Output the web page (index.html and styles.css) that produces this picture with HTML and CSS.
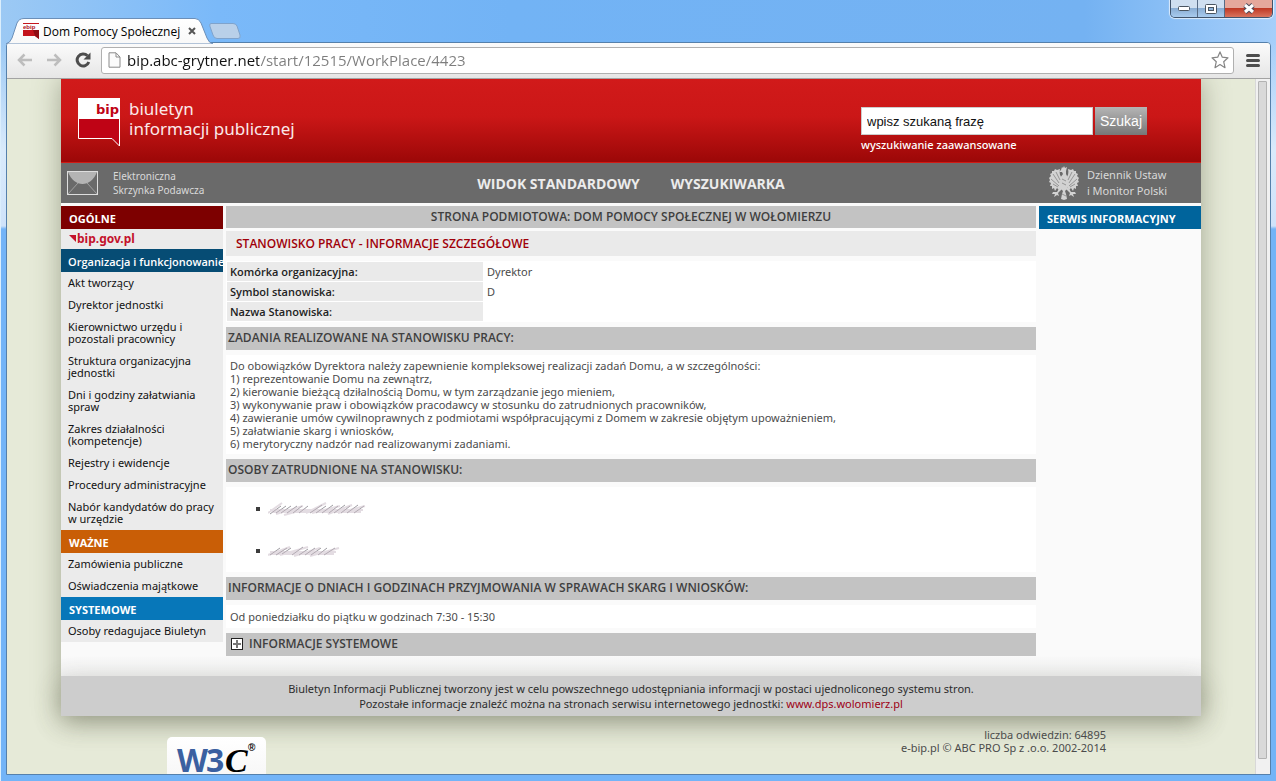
FILE: index.html
```html
<!DOCTYPE html>
<html lang="pl">
<head>
<meta charset="utf-8">
<title>Dom Pomocy Społecznej w Wołomierzu</title>
<link rel="stylesheet" href="styles.css">
</head>
<body>
<div class="window">
  <div class="titlebar">
    <div class="tab">
      <svg class="tab-shape" width="208" height="26" viewBox="0 0 208 26" aria-hidden="true">
        <defs><linearGradient id="tabfill" x1="0" y1="0" x2="0" y2="1"><stop offset="0" stop-color="#fff"/><stop offset="1" stop-color="#f8f8f8"/></linearGradient></defs>
        <path d="M0 26 Q4 25 6 20 L11 5 Q13 .5 18 .5 H189 Q193 .5 195 5 L201 20 Q203 25 207 26Z" fill="url(#tabfill)" stroke="#6c8fb8"/>
      </svg>
      <svg class="favicon" width="17" height="16" viewBox="0 0 17 16" aria-hidden="true">
        <path d="M0 .5H16" stroke="#c4141c"/>
        <text x="0" y="6" class="fav-text">ebip</text>
        <path d="M0 7H16V16L12 13H0Z" fill="#c4141c"/><path d="M10 7H16V16L12 13Z" fill="#8f0c12"/>
      </svg>
      <span class="tab-title">Dom Pomocy Społecznej</span>
      <button class="tab-close" aria-label="Zamknij kartę"><svg width="8" height="8" viewBox="0 0 8 8"><path d="M1 1L7 7M7 1L1 7" stroke="#555" stroke-width="2"/></svg></button>
    </div>
    <button class="new-tab" aria-label="Nowa karta"><svg width="32" height="16" viewBox="0 0 32 16"><path d="M2 .5H24Q27 .5 28 3L31 12Q32 15.500 29 15.500H8Q5 15.500 4 12L.8 3Q.3 .5 2 .5Z" fill="#b9d0e9" stroke="#7fa3cc"/></svg></button>
    <div class="controls">
      <button class="ctl" aria-label="Minimalizuj"><svg width="12" height="5" viewBox="0 0 12 5"><rect x=".5" y=".5" width="11" height="4" rx="1" fill="#fff" stroke="#4a5560"/></svg></button>
      <button class="ctl" aria-label="Maksymalizuj"><svg width="12" height="10" viewBox="0 0 12 10"><rect x=".5" y=".5" width="11" height="9" rx="1" fill="#fff" stroke="#4a5560"/><rect x="3.500" y="3.500" width="5" height="3" fill="#8fb4da" stroke="#4a5560"/></svg></button>
      <button class="ctl ctl-close" aria-label="Zamknij"><svg width="14" height="11" viewBox="0 0 14 11"><path d="M3 2L11 9M11 2L3 9" stroke="#4b4a5a" stroke-width="5"/><path d="M3 2L11 9M11 2L3 9" stroke="#fff" stroke-width="3"/></svg></button>
    </div>
  </div>
  <div class="browser">
    <div class="toolbar">
      <button class="tool" aria-label="Wstecz"><svg width="16" height="14" viewBox="0 0 16 14"><path d="M15 7H2M7.500 1.500L2 7L7.500 12.500" fill="none" stroke="#bdbdbd" stroke-width="2.500"/></svg></button>
      <button class="tool" aria-label="Dalej"><svg width="16" height="14" viewBox="0 0 16 14"><path d="M1 7H14M8.500 1.500L14 7L8.500 12.500" fill="none" stroke="#bdbdbd" stroke-width="2.500"/></svg></button>
      <button class="tool" aria-label="Odśwież"><svg width="16" height="16" viewBox="0 0 16 16"><path d="M12.500 3.800A6 6 0 1 0 13.800 10" fill="none" stroke="#4d4d4d" stroke-width="3"/><path d="M15.500 .5V7.500H8.500Z" fill="#4d4d4d"/></svg></button>
      <div class="address">
        <svg width="13" height="16" viewBox="0 0 13 16" aria-hidden="true"><path d="M1 .8H8L12 5V15.200H1Z" fill="#fbfbfb" stroke="#8a8a8a"/><path d="M8 1V5H12" fill="none" stroke="#8a8a8a"/></svg>
        <input class="url" type="text" aria-label="Adres" value="bip.abc-grytner.net/start/12515/WorkPlace/4423">
        <button class="star" aria-label="Zakładka"><svg width="18" height="18" viewBox="0 0 18 18"><path d="M9 .9L11.300 6.200L17 6.800L12.700 10.700L14 16.700L9 13.600L4 16.700L5.300 10.700L1 6.800L6.700 6.200Z" fill="#fff" stroke="#858585" stroke-width="1.200" stroke-linejoin="round"/></svg></button>
      </div>
      <button class="tool menu" aria-label="Menu"><svg width="14" height="13" viewBox="0 0 14 13"><path d="M1.500 1.500H12.500M1.500 6.500H12.500M1.500 11.500H12.500" stroke="#4d4d4d" stroke-width="3" stroke-linecap="round"/></svg></button>
    </div>
    <div class="viewport">
      <div class="page">
        <div class="sheet">
          <header class="banner">
            <div class="brand">
              <svg width="42" height="50" viewBox="0 0 42 50" aria-hidden="true">
                <path d="M.5 21V41.500H34L41.500 49V21Z" fill="#bf0315" stroke="#fff"/>
                <path d="M0 1H42V22H0Z" fill="#fff"/>
                <text x="41" y="17" text-anchor="end" class="bip-text">bip</text>
              </svg>
              <p class="brand-name">biuletyn<br>informacji publicznej</p>
            </div>
            <form class="search">
              <div class="search-row">
                <input class="search-box" type="text" aria-label="Szukana fraza" value="wpisz szukaną frazę">
                <button class="search-go" type="button">Szukaj</button>
              </div>
              <a class="advanced" href="#">wyszukiwanie zaawansowane</a>
            </form>
          </header>
          <nav class="topnav">
            <a class="inbox" href="#">
              <svg width="31" height="24" viewBox="0 0 31 24" aria-hidden="true"><path d="M1 1C7 17 24 17 30 1Z" fill="#b4b4b4"/><path d="M1 23L11 12M30 23L20 12" stroke="#a0a0a0"/><rect x=".5" y=".5" width="30" height="23" fill="none" stroke="#dedede"/></svg>
              <span>Elektroniczna<br>Skrzynka Podawcza</span>
            </a>
            <div class="modes"><a href="#">WIDOK STANDARDOWY</a><a href="#">WYSZUKIWARKA</a></div>
            <a class="journal" href="#">
              <svg width="32" height="34" viewBox="0 0 32 34" aria-hidden="true">
                <g fill="#d2d2d2">
                  <path d="M14 12C12 10 11 7 12 3L9 4L7 3L6 5L4 5L4 7L2 8L3 10L1 12L2 14L1 16L3 17L2 20L4 20L4 23L6 22L7 25L9 22L11 24L13 20Z"/>
                  <path d="M18 12C20 10 21 7 20 3L23 4L25 3L26 5L28 5L28 7L30 8L29 10L31 12L30 14L31 16L29 17L30 20L28 20L28 23L26 22L25 25L23 22L21 24L19 20Z"/>
                  <path d="M13 4L14 1L15 2L16 0L17 2L19 1L18 5L18 8L20 12L21 18L19 23L17 25L18 28L19 33L16 34L13 33L14 28L15 25L12 22L11 17L12 12L15 8L14 6L11 6Z"/>
                  <path d="M12 21L9 26L5 26L4 28L7 28L6 31L9 29L11 30L10 27L14 23ZM20 21L23 26L27 26L28 28L25 28L26 31L23 29L21 30L22 27L18 23Z"/>
                </g>
                <path d="M5 8L11 17M3 13L11 20M8 6L12 14M5 18L10 21M27 8L21 17M29 13L21 20M24 6L20 14M27 18L22 21M14 13L18 15M14 17L18 19M14 28L18 30" stroke="#959595" fill="none"/>
              </svg>
              <span>Dziennik Ustaw<br>i Monitor Polski</span>
            </a>
          </nav>
          <div class="columns">
            <aside class="side">
              <h2 class="side-head maroon">OGÓLNE</h2>
              <a class="gov" href="#"><svg width="80" height="16" viewBox="0 0 80 16" role="img" aria-label="bip.gov.pl"><path d="M0 4H7V11Z" fill="#c4122b"/><text x="8" y="12" class="gov-text">bip.gov.pl</text></svg></a>
              <h2 class="side-head navy">Organizacja i funkcjonowanie</h2>
              <ul class="side-list">
                <li><a href="#">Akt tworzący</a></li>
                <li><a href="#">Dyrektor jednostki</a></li>
                <li><a href="#">Kierownictwo urzędu i<br>pozostali pracownicy</a></li>
                <li><a href="#">Struktura organizacyjna<br>jednostki</a></li>
                <li><a href="#">Dni i godziny załatwiania<br>spraw</a></li>
                <li><a href="#">Zakres działalności<br>(kompetencje)</a></li>
                <li><a href="#">Rejestry i ewidencje</a></li>
                <li><a href="#">Procedury administracyjne</a></li>
                <li><a href="#">Nabór kandydatów do pracy<br>w urzędzie</a></li>
              </ul>
              <h2 class="side-head orange">WAŻNE</h2>
              <ul class="side-list">
                <li><a href="#">Zamówienia publiczne</a></li>
                <li><a href="#">Oświadczenia majątkowe</a></li>
              </ul>
              <h2 class="side-head blue">SYSTEMOWE</h2>
              <ul class="side-list">
                <li><a href="#">Osoby redagujace Biuletyn</a></li>
              </ul>
            </aside>
            <main class="main">
              <h1 class="subject">STRONA PODMIOTOWA: DOM POMOCY SPOŁECZNEJ W WOŁOMIERZU</h1>
              <h2 class="title">STANOWISKO PRACY - INFORMACJE SZCZEGÓŁOWE</h2>
              <table class="facts">
                <tr><th scope="row">Komórka organizacyjna:</th><td>Dyrektor</td></tr>
                <tr><th scope="row">Symbol stanowiska:</th><td>D</td></tr>
                <tr><th scope="row">Nazwa Stanowiska:</th><td></td></tr>
              </table>
              <h3 class="bar">ZADANIA REALIZOWANE NA STANOWISKU PRACY:</h3>
              <div class="block">Do obowiązków Dyrektora należy zapewnienie kompleksowej realizacji zadań Domu, a w szczególności:<br>
                1) reprezentowanie Domu na zewnątrz,<br>
                2) kierowanie bieżącą dziłalnością Domu, w tym zarządzanie jego mieniem,<br>
                3) wykonywanie praw i obowiązków pracodawcy w stosunku do zatrudnionych pracowników,<br>
                4) zawieranie umów cywilnoprawnych z podmiotami współpracującymi z Domem w zakresie objętym upoważnieniem,<br>
                5) załatwianie skarg i wniosków,<br>
                6) merytoryczny nadzór nad realizowanymi zadaniami.</div>
              <h3 class="bar">OSOBY ZATRUDNIONE NA STANOWISKU:</h3>
              <ul class="people">
                <li><svg width="98" height="16" viewBox="0 0 98 16" aria-hidden="true"><g class="smudge">
                  <path d="M2 13L13 5M8 12L18 5M13 12L23 5M19 12L29 5M25 12L34 5M31 12L40 5M42 12L54 4M48 12L58 5M54 12L65 4M61 12L70 5M66 12L77 4M73 12L82 5M79 12L90 4M86 12L96 5"/>
                  <path class="faint" d="M0 12L14 2M8 13L35 5M16 14L38 8M38 12L58 2M44 12L72 5M60 13L84 4M70 12L97 5M2 9H95M4 11H93"/></g></svg></li>
                <li><svg width="98" height="16" viewBox="0 0 98 16" aria-hidden="true"><g class="smudge">
                  <path d="M2 12L12 5M8 12L19 5M14 11L23 5M24 12L35 4M31 12L40 6M37 12L47 5M43 12L53 5M50 12L59 5M56 12L67 5"/>
                  <path class="faint" d="M0 12L22 4M12 12L40 4M26 13L52 5M42 13L71 5M2 9H68M3 11H66"/></g></svg></li>
              </ul>
              <h3 class="bar">INFORMACJE O DNIACH I GODZINACH PRZYJMOWANIA W SPRAWACH SKARG I WNIOSKÓW:</h3>
              <div class="block hours">Od poniedziałku do piątku w godzinach 7:30 - 15:30</div>
              <h3 class="bar bar-toggle"><button class="toggle" aria-label="Rozwiń"><svg width="12" height="12" viewBox="0 0 12 12"><rect x=".5" y=".5" width="11" height="11" fill="#fff" stroke="#222"/><path d="M2 6H10M6 2V10" stroke="#777" stroke-width="2"/></svg></button>INFORMACJE SYSTEMOWE</h3>
            </main>
            <aside class="side side-right"><h2 class="side-head azure">SERWIS INFORMACYJNY</h2></aside>
          </div>
          <footer class="foot">Biuletyn Informacji Publicznej tworzony jest w celu powszechnego udostępniania informacji w postaci ujednoliconego systemu stron.<br>Pozostałe informacje znaleźć można na stronach serwisu internetowego jednostki: <a href="#">www.dps.wolomierz.pl</a></footer>
        </div>
        <div class="below">
          <div class="w3c">
            <svg width="99" height="60" viewBox="0 0 99 60" role="img" aria-label="W3C">
              <text x="10" y="35" class="w3-blue">W</text><text x="39" y="35" class="w3-blue">3</text>
              <text x="58" y="35" class="w3-c">C</text><text x="81" y="14" class="w3-r">®</text>
            </svg>
          </div>
          <p class="stats">liczba odwiedzin: 64895<br>e-bip.pl © ABC PRO Sp z .o.o. 2002-2014</p>
        </div>
      </div>
      <div class="scroll"><div class="thumb"></div></div>
    </div>
  </div>
</div>
</body>
</html>
```
FILE: styles.css
```css
* { box-sizing: border-box; }
body { margin: 0; font-family: "Noto Sans", "Open Sans", sans-serif; font-size: 11px; color: #4b4b4b; }
h1, h2, h3, p, ul { margin: 0; padding: 0; }
ul { list-style: none; }
a { color: inherit; text-decoration: none; }
svg { display: block; flex: none; }
button { border: 0; padding: 0; background: none; display: flex; align-items: center; justify-content: center; }

.window { height: 100vh; display: flex; flex-direction: column; padding: 0 5px 6px; overflow: hidden; border-left: 1px solid #dbeefc;
  background: linear-gradient(180deg, transparent 42px, #d9eafb 150px, #cfe3fa 226px, #73b4f7 229px), linear-gradient(90deg, #9cc9f4 0, #7ab9f9 17%, #72b3f5 40%, #74b2f2 85%, #a6cffa 100%); }
.titlebar { display: flex; align-items: flex-start; height: 42px; flex: none; }
.tab { position: relative; z-index: 1; display: flex; align-items: center; width: 206px; height: 26px; margin-top: 18px; padding-left: 17px; }
.tab-shape { position: absolute; left: 0; top: 0; }
.favicon { position: relative; }
.fav-text { font: bold 6px "Liberation Sans", sans-serif; fill: #b0101a; }
.tab-title { position: relative; width: 140px; margin-left: 3px; white-space: nowrap; font: 12px "Open Sans", sans-serif; color: #000; }
.tab-close { position: relative; width: 16px; height: 16px; margin-left: 1px; }
.new-tab { margin: 23px 0 0 -3px; }
.controls { display: flex; margin-left: auto; margin-right: -2px; border: 1px solid #41546c; border-top: 0; border-radius: 0 0 5px 5px; overflow: hidden; box-shadow: 0 0 1px 1px rgba(255,255,255,.7); }
.ctl { width: 27px; height: 17px; background: linear-gradient(#cfdff0 45%, #8aaed4 50%, #a8cbee); border-right: 1px solid #566b85; }
.ctl-close { width: 47px; border: 0; background: linear-gradient(#e5a79b 45%, #bf3925 50%, #d9745e); }

.browser { flex: 1; min-height: 0; display: flex; flex-direction: column; border: 1px solid #5580ab; border-radius: 4px 4px 0 0; background: #e6ead8; overflow: hidden; }
.toolbar { display: flex; align-items: center; height: 36px; flex: none; padding: 0 8px 1px 9px; background: linear-gradient(#fbfbfb, #e6e6e6); border-bottom: 1px solid #a3a3a3; }
.tool { width: 18px; height: 18px; margin-right: 11px; }
.address { flex: 1; display: flex; align-items: center; gap: 6px; height: 27px; margin-left: -2px; padding: 0 4px 0 6px; background: #fff; border: 1px solid #b0b0b0; border-radius: 3px; }
.url { flex: 1; min-width: 0; border: 0; padding: 0; outline: 0; font: 15px "Open Sans", sans-serif; color: transparent;
  background: linear-gradient(90deg, #111 132px, #7d7d7d 132px); background-clip: text; -webkit-background-clip: text; }
.menu { margin: 0 0 0 10px; }

.viewport { flex: 1; min-height: 0; display: flex; }
.page { flex: 1; min-width: 0; overflow: hidden; }
.scroll { width: 15px; padding: 2px 3px 15px 2px; background: #f1f1f1; border-left: 1px solid #d8d8d8; }
.thumb { height: 100%; background: #d9d9d9; border: 1px solid #b3b3b3; border-radius: 1px; }

.sheet { max-width: 1140px; margin: 0 auto; background: #fafafa; box-shadow: 0 0 26px rgba(80,84,60,.45); }
.banner { display: flex; justify-content: space-between; height: 84px; padding: 18px 54px 0 17px; background: linear-gradient(#d11a1a, #cb1717 45%, #9e0808 97%); border-bottom: 1px solid #d11a14; }
.brand { display: flex; gap: 9px; }
.brand-name { font: 17px/20px "Noto Sans", sans-serif; color: #fbe9e9; padding-top: 2px; }
.bip-text { font: bold 13px "DejaVu Sans", sans-serif; fill: #bf0315; }
.search { width: 286px; padding-top: 10px; }
.search-row { display: flex; gap: 2px; }
.search-box { flex: 1; min-width: 0; height: 28px; padding: 0 5px; border: 1px solid #ccc; font: 13px "Liberation Sans", Arial, sans-serif; color: #111; background: #fff; }
.search-go { width: 52px; background: linear-gradient(#b5b5b5, #777); color: #fff; font: 14px "Liberation Sans", Arial, sans-serif; }
.advanced { display: block; margin-top: 2px; line-height: 16px; color: #fff; font-weight: 500; }

.topnav { display: grid; grid-template-columns: 1fr auto 1fr; align-items: center; height: 40px; padding: 0 34px 0 6px; background: #6a6a6a; color: #d9d9d9; }
.inbox { display: flex; align-items: center; gap: 15px; font: 10px/14px "Noto Sans", sans-serif; }
.modes { display: flex; gap: 31px; padding-left: 28px; font: bold 14px "Open Sans", sans-serif; color: #ececec; }
.journal { display: flex; align-items: center; justify-content: flex-end; gap: 7px; font: 11px/16px "Noto Sans", sans-serif; }

.columns { display: grid; grid-template-columns: 162px minmax(0, 1fr) 162px; column-gap: 3px; padding: 3px 0 20px; background: linear-gradient(#fafafa calc(100% - 20px), #f0f0f0); align-items: start; }
.side { background: #ebebeb; }
.side-head { padding: 2px 0 0 8px; line-height: 21px; font-family: "Open Sans", sans-serif; font-size: 11px; color: #fff; white-space: nowrap; }
.maroon { background: #7d0000; }
.navy { padding-left: 7px; background: #064c74; font-weight: 600; }
.orange { background: #c95e06; }
.blue { background: #0777b9; }
.azure { background: #00649c; }
.gov { display: block; height: 20px; padding: 2px 0 0 8px; }
.gov-text { font: bold 12px "Noto Sans", sans-serif; fill: #c4122b; }
.side-list a { display: block; padding: 5px 0 5px 7px; line-height: 12px; color: #111; white-space: nowrap; }

.subject, .title, .bar { font: 600 12px "Open Sans", sans-serif; color: #3f3f3f; }
.subject { line-height: 22px; text-align: center; background: #c3c3c3; }
.title { margin: 3px 0 5px; padding-left: 10px; line-height: 25px; background: #eaeaea; color: #a00009; }
.facts { width: 100%; border-spacing: 1px; background: #fff; }
.facts th, .facts td { height: 19px; padding: 0 3px; text-align: left; line-height: 19px; }
.facts th { width: 256px; background: #eaeaea; color: #222; font: 600 11px/19px "Open Sans", sans-serif; }
.bar { margin: 5px 0; padding: 0 2px 1px; line-height: 22px; background: #c3c3c3; }
.block { padding: 4px 4px; background: #fff; line-height: 13px; }
.hours { padding: 5px 4px; }
.hours + .bar-toggle { margin-bottom: 0; }
.people { display: flex; flex-direction: column; gap: 26px; padding: 14px 30px 13px; background: #fff; }
.people li { display: flex; align-items: center; gap: 8px; }
.people li::before { content: ""; width: 4px; height: 4px; background: #3c3c3c; }
.smudge { fill: none; stroke: #85838a; stroke-width: 1; opacity: .8; filter: blur(.5px); }
.faint { stroke: #b9a8b6; stroke-width: 2; opacity: .5; }
.bar-toggle { display: flex; align-items: center; gap: 6px; padding-left: 5px; }

.foot { padding: 5px 0; line-height: 15px; text-align: center; background: #cdcdcd; color: #2c2c2c; box-shadow: 0 8px 26px rgba(80,84,60,.3); }
.foot a { color: #9d0015; }
.below { display: flex; justify-content: space-between; align-items: flex-start; max-width: 1140px; margin: 0 auto; padding: 12px 95px 0 106px; }
.w3c { margin-top: 9px; border-radius: 5px; background: linear-gradient(#fff, #f3f3f3); }
.w3-blue { font: bold 32px "Open Sans", sans-serif; fill: #3b60a0; }
.w3-c { font: italic bold 34px "Liberation Serif", serif; fill: #000; }
.w3-r { font: bold 10px "Liberation Sans", sans-serif; fill: #000; }
.stats { line-height: 13px; text-align: right; }
```
